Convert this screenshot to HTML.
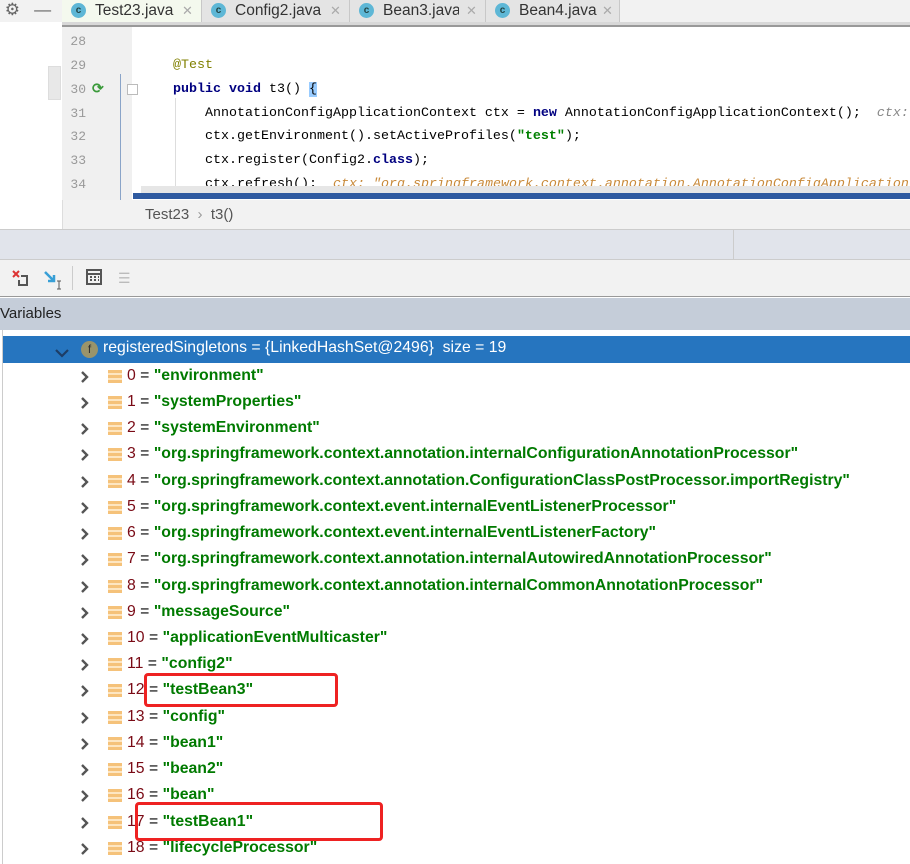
<!DOCTYPE html>
<html><head><meta charset="utf-8"><style>
*{margin:0;padding:0;box-sizing:border-box}
body{width:910px;height:864px;position:relative;overflow:hidden;background:#fff;font-family:"Liberation Sans",sans-serif}
.abs{position:absolute}
.tab{position:absolute;top:0;height:22px;background:#e4e4e4;border-right:1px solid #c8c8c8;font-size:15.5px;color:#333;line-height:22px}
.tab .ic{position:absolute;left:9px;top:3px;width:15px;height:15px;border-radius:50%;background:#5eb7d6;color:#244;font-size:10px;line-height:15px;text-align:center;font-weight:bold}
.tab .x{position:absolute;color:#aaa;font-size:13px}
.ln{position:absolute;left:62px;width:24px;text-align:right;font-family:"Liberation Mono",monospace;font-size:13px;color:#999}
.code{position:absolute;font-family:"Liberation Mono",monospace;font-size:13.33px;color:#000;white-space:pre}
.kw{color:#000080;font-weight:bold}
.row{position:absolute;left:0;width:910px;height:26px;font-size:15.8px;line-height:26px}
.row .ch{position:absolute;left:80px;top:8px;width:10px;height:12px;background:url() }
.row .li{position:absolute;left:108px;top:7px;width:14px;height:13px;background:repeating-linear-gradient(#f5c27a 0 3px,#fde6c2 3px 5px)}
.row .t{position:absolute;left:127px;top:0;white-space:pre}
.idx{color:#7a0b16}
.v{font-weight:bold;color:#007a00}
</style></head><body>
<div class="abs" style="left:0;top:0;width:910px;height:22px;background:#f2f2f2"></div>
<div class="abs" style="left:0;top:0;width:62px;height:22px;background:#f2f2f2;color:#666;font-size:17px;line-height:20px">&nbsp;⚙&nbsp;&nbsp;&nbsp;—</div>
<div class="tab" style="left:62px;width:140px;background:#f4f9ee"><span class="ic">c</span><span style="position:absolute;left:33px">Test23.java</span><span class="x" style="left:120px">✕</span></div>
<div class="tab" style="left:202px;width:148px"><span class="ic">c</span><span style="position:absolute;left:33px">Config2.java</span><span class="x" style="left:128px">✕</span></div>
<div class="tab" style="left:350px;width:136px"><span class="ic">c</span><span style="position:absolute;left:33px;width:76px;overflow:hidden;white-space:nowrap">Bean3.java</span><span class="x" style="left:116px">✕</span></div>
<div class="tab" style="left:486px;width:134px"><span class="ic">c</span><span style="position:absolute;left:33px;width:78px;overflow:hidden;white-space:nowrap">Bean4.java</span><span class="x" style="left:116px">✕</span></div>
<div class="abs" style="left:62px;top:22px;width:848px;height:5px;background:#d8d8d8;border-bottom:2px solid #999"></div>
<div class="abs" style="left:62px;top:27px;width:70px;height:173px;background:#f0f0f0"></div>
<div class="abs" style="left:48px;top:66px;width:13px;height:34px;background:#e8e8e8;border:1px solid #ddd"></div>
<div class="abs" style="left:120px;top:74px;width:1px;height:126px;background:#8aa4c8"></div>
<div class="ln" style="top:34px">28</div><div class="ln" style="top:58px">29</div><div class="ln" style="top:82px">30</div><div class="ln" style="top:106px">31</div><div class="ln" style="top:129px">32</div><div class="ln" style="top:153px">33</div><div class="ln" style="top:177px">34</div>
<div class="abs" style="left:92px;top:80px;color:#3a9a3a;font-size:14px;font-weight:bold">⟳</div>
<div class="abs" style="left:127px;top:84px;width:11px;height:11px;border:1px solid #bbb;background:#fff"></div>
<div class="code" style="left:173px;top:58px;color:#808000">@Test</div>
<div class="code" style="left:173px;top:82px"><span class="kw">public void</span> t3() <span style="background:#99ccff">{</span></div>
<div class="abs" style="left:175px;top:98px;width:1px;height:100px;background:#ddd"></div>
<div class="code" style="left:205px;top:106px">AnnotationConfigApplicationContext ctx = <span class="kw">new</span> AnnotationConfigApplicationContext();  <span style="color:#888;font-style:italic">ctx:</span></div>
<div class="code" style="left:205px;top:129px">ctx.getEnvironment().setActiveProfiles(<span style="color:#008000;font-weight:bold">"test"</span>);</div>
<div class="code" style="left:205px;top:153px">ctx.register(Config2.<span class="kw">class</span>);</div>
<div class="code" style="left:205px;top:177px">ctx.refresh();  <span style="color:#c98a3a;font-style:italic">ctx: "org.springframework.context.annotation.AnnotationConfigApplication</span></div>
<div class="abs" style="left:141px;top:186px;width:769px;height:7px;background:#e6e6e6"></div>
<div class="abs" style="left:133px;top:193px;width:777px;height:6px;background:#2f5aa0"></div>
<div class="abs" style="left:62px;top:200px;width:848px;height:29px;background:#f2f2f2;border-left:1px solid #ddd"></div>
<div class="abs" style="left:145px;top:206px;font-size:15px;color:#555">Test23 &nbsp;<span style="color:#999">›</span>&nbsp; t3()</div>
<div class="abs" style="left:0;top:229px;width:910px;height:31px;background:#e1e4eb;border-top:1px solid #ccc;border-bottom:1px solid #ccc"></div>
<div class="abs" style="left:733px;top:229px;width:1px;height:31px;background:#ccc"></div>
<div class="abs" style="left:0;top:260px;width:910px;height:37px;background:#f2f2f2;border-bottom:1px solid #999"></div>
<div class="abs" style="left:12px;top:270px"><svg width="18" height="18"><path d="M1 1l6 6M7 1L1 7" stroke="#d33" stroke-width="2"/><path d="M9 6h6v9H7v-5" stroke="#555" stroke-width="2" fill="none"/></svg></div>
<div class="abs" style="left:44px;top:270px"><svg width="20" height="20"><path d="M1 2l9 9M10 5v6H4" stroke="#389fd6" stroke-width="2.5" fill="none"/><path d="M13 11h4M15 11v8M13 19h4" stroke="#555" stroke-width="1"/></svg></div>
<div class="abs" style="left:72px;top:266px;width:1px;height:24px;background:#ccc"></div>
<div class="abs" style="left:86px;top:269px"><svg width="16" height="16"><rect x="1" y="1" width="14" height="14" fill="none" stroke="#555" stroke-width="2"/><path d="M1 5h14M4 8h2M8 8h2M12 8h1M4 11h2M8 11h2M12 11h1" stroke="#555" stroke-width="2"/></svg></div>
<div class="abs" style="left:118px;top:270px;color:#bbb;font-size:14px">☰</div>
<div class="abs" style="left:0;top:298px;width:910px;height:32px;background:#c5cdd9"></div>
<div class="abs" style="left:0;top:305px;font-size:15px;color:#222">Variables</div>
<div class="abs" style="left:2px;top:330px;width:1px;height:534px;background:#ccc"></div>
<div class="abs" style="left:3px;top:336px;width:907px;height:27px;background:#2675bf"></div>
<div class="abs" style="left:55px;top:345px"><svg width="14" height="9"><path d="M1 1l6 6 6-6" stroke="#1d3d66" stroke-width="2.2" fill="none"/></svg></div>
<div class="abs" style="left:81px;top:341px;width:17px;height:17px;border-radius:50%;background:#9a946a;color:#333;font-size:12px;text-align:center;line-height:17px">f</div>
<div class="abs" style="left:103px;top:339px;font-size:15.8px;color:#fff;white-space:pre">registeredSingletons = {LinkedHashSet@2496}  size = 19</div>
<svg width="0" height="0" style="position:absolute"><defs><symbol id="cv" viewBox="0 0 10 12"><path d="M2 1l5 5-5 5" stroke="#555" stroke-width="2.4" fill="none"/></symbol></defs></svg>
<div class="row" style="top:363px"><svg class="ch" viewBox="0 0 10 12"><use href="#cv"/></svg><span class="li"></span><span class="t"><span class="idx">0</span> = <span class="v">"environment"</span></span></div>
<div class="row" style="top:389px"><svg class="ch" viewBox="0 0 10 12"><use href="#cv"/></svg><span class="li"></span><span class="t"><span class="idx">1</span> = <span class="v">"systemProperties"</span></span></div>
<div class="row" style="top:415px"><svg class="ch" viewBox="0 0 10 12"><use href="#cv"/></svg><span class="li"></span><span class="t"><span class="idx">2</span> = <span class="v">"systemEnvironment"</span></span></div>
<div class="row" style="top:441px"><svg class="ch" viewBox="0 0 10 12"><use href="#cv"/></svg><span class="li"></span><span class="t"><span class="idx">3</span> = <span class="v">"org.springframework.context.annotation.internalConfigurationAnnotationProcessor"</span></span></div>
<div class="row" style="top:468px"><svg class="ch" viewBox="0 0 10 12"><use href="#cv"/></svg><span class="li"></span><span class="t"><span class="idx">4</span> = <span class="v">"org.springframework.context.annotation.ConfigurationClassPostProcessor.importRegistry"</span></span></div>
<div class="row" style="top:494px"><svg class="ch" viewBox="0 0 10 12"><use href="#cv"/></svg><span class="li"></span><span class="t"><span class="idx">5</span> = <span class="v">"org.springframework.context.event.internalEventListenerProcessor"</span></span></div>
<div class="row" style="top:520px"><svg class="ch" viewBox="0 0 10 12"><use href="#cv"/></svg><span class="li"></span><span class="t"><span class="idx">6</span> = <span class="v">"org.springframework.context.event.internalEventListenerFactory"</span></span></div>
<div class="row" style="top:546px"><svg class="ch" viewBox="0 0 10 12"><use href="#cv"/></svg><span class="li"></span><span class="t"><span class="idx">7</span> = <span class="v">"org.springframework.context.annotation.internalAutowiredAnnotationProcessor"</span></span></div>
<div class="row" style="top:573px"><svg class="ch" viewBox="0 0 10 12"><use href="#cv"/></svg><span class="li"></span><span class="t"><span class="idx">8</span> = <span class="v">"org.springframework.context.annotation.internalCommonAnnotationProcessor"</span></span></div>
<div class="row" style="top:599px"><svg class="ch" viewBox="0 0 10 12"><use href="#cv"/></svg><span class="li"></span><span class="t"><span class="idx">9</span> = <span class="v">"messageSource"</span></span></div>
<div class="row" style="top:625px"><svg class="ch" viewBox="0 0 10 12"><use href="#cv"/></svg><span class="li"></span><span class="t"><span class="idx">10</span> = <span class="v">"applicationEventMulticaster"</span></span></div>
<div class="row" style="top:651px"><svg class="ch" viewBox="0 0 10 12"><use href="#cv"/></svg><span class="li"></span><span class="t"><span class="idx">11</span> = <span class="v">"config2"</span></span></div>
<div class="row" style="top:677px"><svg class="ch" viewBox="0 0 10 12"><use href="#cv"/></svg><span class="li"></span><span class="t"><span class="idx">12</span> = <span class="v">"testBean3"</span></span></div>
<div class="row" style="top:704px"><svg class="ch" viewBox="0 0 10 12"><use href="#cv"/></svg><span class="li"></span><span class="t"><span class="idx">13</span> = <span class="v">"config"</span></span></div>
<div class="row" style="top:730px"><svg class="ch" viewBox="0 0 10 12"><use href="#cv"/></svg><span class="li"></span><span class="t"><span class="idx">14</span> = <span class="v">"bean1"</span></span></div>
<div class="row" style="top:756px"><svg class="ch" viewBox="0 0 10 12"><use href="#cv"/></svg><span class="li"></span><span class="t"><span class="idx">15</span> = <span class="v">"bean2"</span></span></div>
<div class="row" style="top:782px"><svg class="ch" viewBox="0 0 10 12"><use href="#cv"/></svg><span class="li"></span><span class="t"><span class="idx">16</span> = <span class="v">"bean"</span></span></div>
<div class="row" style="top:809px"><svg class="ch" viewBox="0 0 10 12"><use href="#cv"/></svg><span class="li"></span><span class="t"><span class="idx">17</span> = <span class="v">"testBean1"</span></span></div>
<div class="row" style="top:835px"><svg class="ch" viewBox="0 0 10 12"><use href="#cv"/></svg><span class="li"></span><span class="t"><span class="idx">18</span> = <span class="v">"lifecycleProcessor"</span></span></div>
<div class="abs" style="left:144px;top:673px;width:194px;height:34px;border:3px solid #ee2222;border-radius:4px"></div>
<div class="abs" style="left:135px;top:802px;width:248px;height:39px;border:3px solid #ee2222;border-radius:4px"></div>
</body></html>
